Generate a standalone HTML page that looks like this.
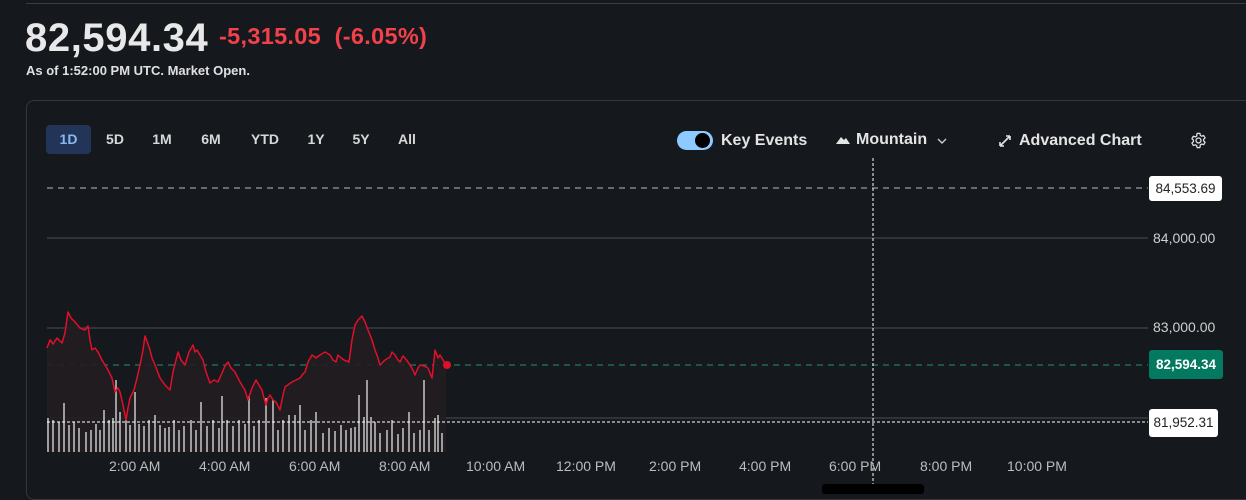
<!DOCTYPE html>
<html><head><meta charset="utf-8"><style>
*{margin:0;padding:0;box-sizing:border-box}
body{width:1246px;height:490px;background:#15181d;font-family:"Liberation Sans",sans-serif;color:#e8e8e8;position:relative;overflow:hidden}
.a{position:absolute;white-space:nowrap}
.b{font-weight:bold}
.tab{position:absolute;top:125px;height:29px;line-height:29px;font-size:14px;font-weight:bold;color:#d8d8d8;text-align:center}
.ax{position:absolute;font-size:14px;color:#bdbdbd;top:458px}
.yl{position:absolute;font-size:14px;color:#cfcfcf}
</style></head><body>
<div class="a" style="left:26px;top:3px;width:1220px;height:1px;background:#3a3d42"></div>
<div class="a b" style="left:25px;top:16px;font-size:40px;color:#e8e8e8;letter-spacing:0.6px">82,594.34</div>
<div class="a b" style="left:219px;top:23px;font-size:23.5px;color:#f2414a;letter-spacing:0.3px">-5,315.05&nbsp;&nbsp;(-6.05%)</div>
<div class="a b" style="left:26px;top:63px;font-size:13px;color:#e0e0e0">As of 1:52:00 PM UTC. Market Open.</div>
<div class="a" style="left:26px;top:100px;width:1240px;height:400px;border:1px solid #34373c;border-radius:8px"></div>

<div class="tab" style="left:46px;width:45px;background:#223458;border-radius:4px;color:#8ab8f0">1D</div>
<div class="tab" style="left:100px;width:30px">5D</div>
<div class="tab" style="left:147px;width:30px">1M</div>
<div class="tab" style="left:196px;width:30px">6M</div>
<div class="tab" style="left:246px;width:38px">YTD</div>
<div class="tab" style="left:302px;width:28px">1Y</div>
<div class="tab" style="left:347px;width:28px">5Y</div>
<div class="tab" style="left:393px;width:28px">All</div>

<div class="a" style="left:677px;top:131px;width:36px;height:19px;border-radius:10px;background:#8ccaff"></div>
<div class="a" style="left:695px;top:133px;width:15px;height:15px;border-radius:50%;background:#000"></div>
<div class="a b" style="left:721px;top:132px;font-size:16px;color:#e4e4e4">Key Events</div>
<svg class="a" style="left:836px;top:135px" width="14" height="10"><path d="M0 9 L5 2 L8 5 L10 3 L14 9Z" fill="#e4e4e4"/></svg>
<div class="a b" style="left:856px;top:131px;font-size:16px;color:#e4e4e4">Mountain</div>
<svg class="a" style="left:937px;top:137px" width="10" height="8"><path d="M1 2 L5 6 L9 2" stroke="#ccc" stroke-width="1.4" fill="none"/></svg>
<svg class="a" style="left:997px;top:133px" width="16" height="16"><path d="M3 13 L13 3 M3 13 L3 9 M3 13 L7 13 M13 3 L9 3 M13 3 L13 7" stroke="#e4e4e4" stroke-width="1.6" fill="none"/></svg>
<div class="a b" style="left:1019px;top:132px;font-size:16px;color:#e4e4e4">Advanced Chart</div>
<svg class="a" style="left:1190px;top:132px" width="17" height="17" viewBox="0 0 24 24"><path d="M12 8.5a3.5 3.5 0 1 0 0 7a3.5 3.5 0 1 0 0-7z M10 2h4l.6 2.8 2 1.1 2.7-.9 2 3.4-2.1 1.9v2.3l2.1 1.9-2 3.4-2.7-.9-2 1.1L14 22h-4l-.6-2.8-2-1.1-2.7.9-2-3.4 2.1-1.9v-2.3L2.7 9.4l2-3.4 2.7.9 2-1.1z" stroke="#e4e4e4" stroke-width="1.8" fill="none" stroke-linejoin="round"/></svg>

<svg class="a" style="left:0;top:0" width="1246" height="490">
<line x1="47" y1="238" x2="1148" y2="238" stroke="#3a3d42" stroke-width="1.5"/>
<line x1="47" y1="328" x2="1148" y2="328" stroke="#3a3d42" stroke-width="1.5"/>
<line x1="47" y1="418" x2="1148" y2="418" stroke="#3a3d42" stroke-width="1.5"/>
<line x1="47" y1="188" x2="1148" y2="188" stroke="#9a9a9a" stroke-width="1.2" stroke-dasharray="6,5"/>
<line x1="47" y1="365" x2="1148" y2="365" stroke="#1d7a63" stroke-width="1.2" stroke-dasharray="6,5"/>
<polygon fill="#221d21" opacity="0.9" points="47,348 50,340 57,338 62,343 68,312 75,322 85,330 88,326 92,350 98,352 105,365 112,378 115,392 120,392 126,420 130,398 134,390 140,365 145,336 150,350 155,365 165,385 170,390 178,352 185,365 193,345 197,350 203,360 210,383 218,382 222,373 228,362 235,372 245,390 248,400 256,380 262,390 266,405 270,395 276,402 280,410 285,387 292,382 300,378 305,372 312,355 320,355 330,355 336,362 340,357 349,362 355,325 362,316 368,330 375,350 380,365 390,357 395,355 400,362 405,358 410,365 415,375 420,365 428,368 432,378 435,350 440,355 446,365 446,452 47,452"/>
<g fill="#b4b4b4" opacity="0.85">
<rect x="47" y="418" width="2" height="34"/><rect x="52" y="420" width="2" height="32"/><rect x="58" y="422" width="2" height="30"/><rect x="63" y="403" width="2" height="49"/><rect x="68" y="425" width="2" height="27"/><rect x="73" y="422" width="2" height="30"/><rect x="78" y="428" width="2" height="24"/><rect x="85" y="432" width="2" height="20"/><rect x="90" y="430" width="2" height="22"/><rect x="95" y="424" width="2" height="28"/><rect x="99" y="430" width="2" height="22"/><rect x="103" y="410" width="2" height="42"/><rect x="108" y="420" width="2" height="32"/><rect x="112" y="418" width="2" height="34"/><rect x="115" y="380" width="2" height="72"/><rect x="119" y="412" width="2" height="40"/><rect x="125" y="420" width="2" height="32"/><rect x="129" y="425" width="2" height="27"/><rect x="134" y="392" width="2" height="60"/><rect x="138" y="424" width="2" height="28"/><rect x="143" y="426" width="2" height="26"/><rect x="148" y="420" width="2" height="32"/><rect x="154" y="415" width="2" height="37"/><rect x="159" y="425" width="2" height="27"/><rect x="164" y="428" width="2" height="24"/><rect x="168" y="427" width="2" height="25"/><rect x="173" y="420" width="2" height="32"/><rect x="178" y="430" width="2" height="22"/><rect x="183" y="426" width="2" height="26"/><rect x="190" y="420" width="2" height="32"/><rect x="195" y="430" width="2" height="22"/><rect x="200" y="402" width="2" height="50"/><rect x="206" y="426" width="2" height="26"/><rect x="212" y="420" width="2" height="32"/><rect x="218" y="428" width="2" height="24"/><rect x="221" y="396" width="2" height="56"/><rect x="226" y="420" width="2" height="32"/><rect x="232" y="426" width="2" height="26"/><rect x="238" y="420" width="2" height="32"/><rect x="244" y="424" width="2" height="28"/><rect x="248" y="396" width="2" height="56"/><rect x="253" y="426" width="2" height="26"/><rect x="258" y="420" width="2" height="32"/><rect x="265" y="398" width="2" height="54"/><rect x="272" y="400" width="2" height="52"/><rect x="277" y="430" width="2" height="22"/><rect x="282" y="420" width="2" height="32"/><rect x="288" y="415" width="2" height="37"/><rect x="294" y="415" width="2" height="37"/><rect x="299" y="405" width="2" height="47"/><rect x="304" y="430" width="2" height="22"/><rect x="310" y="420" width="2" height="32"/><rect x="315" y="412" width="2" height="40"/><rect x="322" y="433" width="2" height="19"/><rect x="328" y="428" width="2" height="24"/><rect x="334" y="431" width="2" height="21"/><rect x="340" y="425" width="2" height="27"/><rect x="345" y="430" width="2" height="22"/><rect x="350" y="428" width="2" height="24"/><rect x="354" y="427" width="2" height="25"/><rect x="358" y="395" width="2" height="57"/><rect x="363" y="417" width="2" height="35"/><rect x="366" y="380" width="2" height="72"/><rect x="370" y="417" width="2" height="35"/><rect x="374" y="422" width="2" height="30"/><rect x="379" y="433" width="2" height="19"/><rect x="386" y="430" width="2" height="22"/><rect x="391" y="420" width="2" height="32"/><rect x="397" y="434" width="2" height="18"/><rect x="402" y="428" width="2" height="24"/><rect x="408" y="412" width="2" height="40"/><rect x="413" y="433" width="2" height="19"/><rect x="419" y="430" width="2" height="22"/><rect x="423" y="380" width="2" height="72"/><rect x="428" y="430" width="2" height="22"/><rect x="434" y="418" width="2" height="34"/><rect x="437" y="415" width="2" height="37"/><rect x="441" y="433" width="2" height="19"/>
</g>
<line x1="47" y1="422" x2="1148" y2="422" stroke="#ffffff" stroke-width="1" stroke-dasharray="3,2"/>
<line x1="873" y1="158" x2="873" y2="490" stroke="#ffffff" stroke-width="1" stroke-dasharray="3,2"/>
<polyline fill="none" stroke="#e0102a" stroke-width="1.5" stroke-linejoin="round" points="47,348 50,340 53,344 57,338 60,341 62,343 65,333 68,312 71,318 75,322 80,328 85,330 88,326 90,340 92,350 95,348 98,352 102,360 105,365 108,370 112,378 115,392 118,388 120,392 123,405 126,420 128,408 130,398 132,394 134,390 137,378 140,365 143,350 145,336 148,344 150,350 152,358 155,365 160,378 165,385 168,388 170,390 173,372 178,352 181,360 185,365 189,352 193,345 195,352 197,350 200,355 203,360 206,372 210,383 214,380 218,382 222,373 225,366 228,362 231,368 235,372 240,382 245,390 248,400 252,388 256,380 259,385 262,390 264,398 266,405 268,398 270,395 273,400 276,402 278,406 280,410 283,395 285,387 289,384 292,382 296,380 300,378 303,374 305,372 308,362 312,355 316,358 320,355 325,352 330,355 333,360 336,362 338,355 340,357 344,360 349,362 352,340 355,325 358,320 362,316 365,322 368,330 372,340 375,350 378,358 380,365 385,360 390,357 392,352 395,355 398,360 400,362 403,356 405,358 408,362 410,365 413,370 415,375 418,368 420,365 424,366 428,368 430,373 432,378 434,360 435,350 438,358 440,355 443,360 446,365"/>
<circle cx="447" cy="365" r="4" fill="#e0102a"/>
</svg>

<div class="yl" style="top:230px;left:1153px">84,000.00</div>
<div class="yl" style="top:319px;left:1153px">83,000.00</div>
<div class="a" style="left:1149px;top:176px;width:73px;height:25px;background:#fff;border-radius:3px;color:#222;font-size:13.5px;line-height:25px;text-align:center">84,553.69</div>
<div class="a" style="left:1149px;top:350px;width:74px;height:29px;background:#037a5f;border-radius:3px;color:#fff;font-size:13.5px;font-weight:bold;line-height:29px;text-align:center">82,594.34</div>
<div class="a" style="left:1149px;top:409px;width:69px;height:28px;background:#fff;border-radius:3px;color:#222;font-size:13.5px;line-height:28px;text-align:center">81,952.31</div>

<div class="ax" style="left:109px">2:00 AM</div>
<div class="ax" style="left:199px">4:00 AM</div>
<div class="ax" style="left:289px">6:00 AM</div>
<div class="ax" style="left:379px">8:00 AM</div>
<div class="ax" style="left:466px">10:00 AM</div>
<div class="ax" style="left:556px">12:00 PM</div>
<div class="ax" style="left:649px">2:00 PM</div>
<div class="ax" style="left:739px">4:00 PM</div>
<div class="ax" style="left:829px">6:00 PM</div>
<div class="ax" style="left:920px">8:00 PM</div>
<div class="ax" style="left:1007px">10:00 PM</div>
<div class="a" style="left:822px;top:484px;width:102px;height:10px;background:#000;border-radius:3px"></div>
</body></html>
